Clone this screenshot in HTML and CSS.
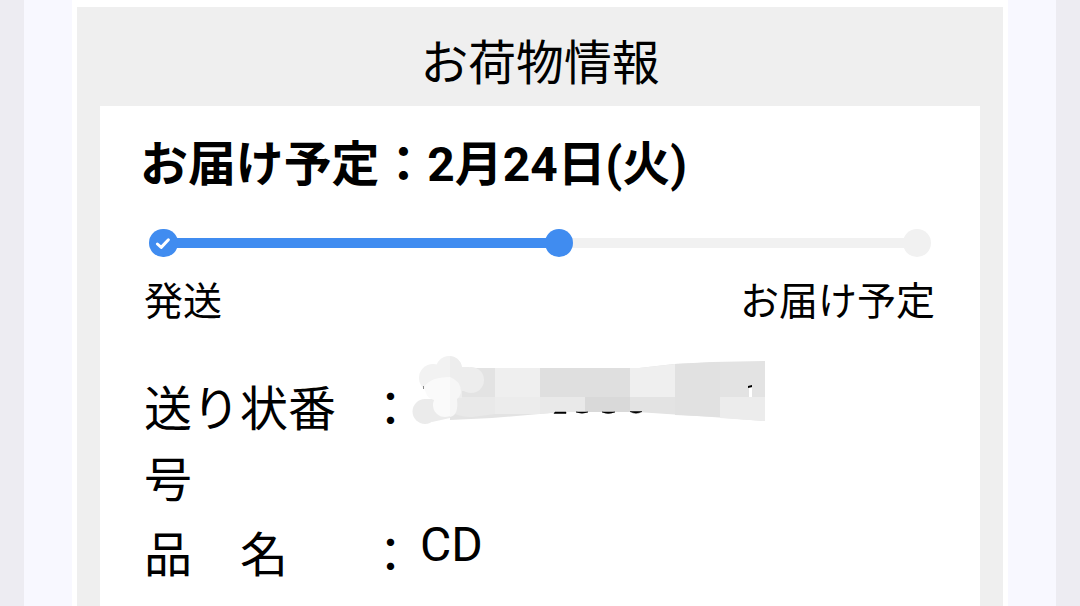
FILE: index.html
```html
<!DOCTYPE html>
<html lang="ja">
<head>
    <meta charset="UTF-8">
    <meta name="viewport" content="width=device-width, initial-scale=1.0">
    <title>お荷物情報</title>
    <link rel="stylesheet" href="styles.css">
</head>
<body>
    <div class="page">
        <div class="container">
            <section class="parcel">
                <h1 class="parcel-title">お荷物情報</h1>
                <div class="card">
                    <h2 class="delivery">お届け予定：2月24日(火)</h2>
                    <div class="progress">
                        <span class="dot done">
                            <svg width="28" height="28" viewBox="0 0 28 28">
                                <path d="M8.4 15 L12.2 18.4 L19.4 10.8" fill="none" stroke="#fff" stroke-width="3" stroke-linecap="round" stroke-linejoin="round"/>
                            </svg>
                        </span>
                        <span class="line done"></span>
                        <span class="dot done"></span>
                        <span class="line"></span>
                        <span class="dot"></span>
                    </div>
                    <div class="steps">
                        <span>発送</span>
                        <span>お届け予定</span>
                    </div>
                    <dl class="details">
                        <dt>送り状番号</dt>
                        <dd class="colon">：</dd>
                        <dd class="value">
                            <!-- masked slip number -->
                            <svg class="mask" width="356" height="72" viewBox="0 0 356 72">
                                <path d="M60 13 H227 L262 9 L300 7 L353 6 V66 L300 62 L225 57 H150 L80 63 L38 65 V20 Z" fill="#e3e3e3"/>
                                <path d="M83 13 H128 V42 H83 Z M218 13 H227 L263 9 V42 H218 Z" fill="#efefef"/>
                                <path d="M128 13 H218 V42 H128 Z" fill="#dfdfdf"/>
                                <path d="M173 42 H218 V57 H173 Z" fill="#d9d9d9"/>
                                <path d="M38 42 H173 V57 H150 L128 59 L83 59 L60 62 Q46 62 38 56 Z" fill="#e9e9e9"/>
                                <path d="M83 42 H128 V59 H83 Z" fill="#ececec"/>
                                <path d="M263 9 L308 7 V62 L263 60 Z" fill="#e1e1e1"/>
                                <path d="M308 42 H353 V66 L308 63 Z" fill="#ececec"/>
                                <circle cx="13" cy="56.5" r="12.5" fill="#ebebeb"/>
                                <path d="M13 44 H38 V63 L20 67 Z" fill="#ebebeb"/>
                                <circle cx="21" cy="23" r="14" fill="#f2f2f2"/>
                                <circle cx="37" cy="14" r="13" fill="#f2f2f2"/>
                                <circle cx="59" cy="25" r="13" fill="#ededed"/>
                                <path d="M38 1 Q48 2 50 12 H57 V36 H50 V43 H38 Z" fill="#ededed"/>
                                <path d="M12 32 Q18 22 38 22 V60 Q31 60 31 43 Q14 45 12 32 Z" fill="#fafafa"/>
                                <circle cx="33" cy="50" r="12" fill="#fafafa"/>
                                <path d="M14 38 H31 V45 H22 Q15 43 14 38 Z" fill="#fafafa"/>
                                <path d="M38 22 Q49 26 49 37 Q48 42 45 44 Q47 60 38 62 Z" fill="#f6f6f6"/>
                                <path d="M11 31 h1 v3 h-1 Z" fill="#888"/>
                                <path d="M143 57 H154 V58.5 H142 Z M164 57 H176 Q170 59.5 164 57 Z M190 57 H203 Q196 60 190 57 Z M218 56.5 H230 Q224 60 218 56.5 Z" fill="#000" stroke="#000" stroke-width=".5"/>
                                <path d="M337 33 h3 v9 h-3 Z" fill="#fff"/>
                                <path d="M336 31 L340 30 V32 L336 33 Z" fill="#000"/>
                            </svg>
                        </dd>
                        <dt>品　名</dt>
                        <dd class="colon">：</dd>
                        <dd class="value">CD</dd>
                    </dl>
                </div>
            </section>
        </div>
    </div>
</body>
</html>
```

FILE: styles.css
```css
* {
    box-sizing: border-box;
}

body {
    margin: 0;
    padding: 0 24px;
    height: 606px;
    overflow: hidden;
    background-color: #edecf2;
    color: #000;
    font-family: Roboto, "Noto Sans CJK JP", sans-serif;
}

.page {
    height: 100%;
    padding: 0 48px;
    background-color: #f8f8ff;
}

.container {
    height: 100%;
    padding: 7px 5px 0;
    background-color: #fff;
}

.parcel {
    height: 600px;
    padding: 0 23px;
    background-color: #efefef;
}

.parcel-title {
    margin: 0;
    padding-top: 21px;
    height: 99px;
    line-height: 72px;
    font-size: 47.8px;
    font-weight: 400;
    text-align: center;
}

.card {
    height: 500px;
    padding: 23px 45px 0 44px;
    background-color: #fff;
}

.delivery {
    margin: 0 0 0 -4px;
    height: 99.5px;
    line-height: 72px;
    font-size: 47.9px;
    font-weight: 700;
    white-space: nowrap;
}

.progress {
    display: flex;
    align-items: center;
    height: 29px;
    margin: 0 4px 0 5px;
}

.dot {
    flex: none;
    width: 28.5px;
    height: 28.5px;
    border-radius: 50%;
    background-color: #f1f1f1;
}

.dot svg {
    display: block;
}

.line {
    flex: 329;
    height: 10px;
    margin: 0 -2px;
    background-color: #f1f1f1;
}

.line.done {
    flex: 367;
}

.done {
    background-color: #408cf0;
}

/* keeps the current dot above the remaining line */
.dot.done {
    z-index: 1;
}

.steps {
    display: flex;
    justify-content: space-between;
    height: 116.5px;
    padding-top: 15.5px;
    line-height: 58px;
    font-size: 39px;
}

.details {
    display: grid;
    grid-template-columns: 222.5px 46.5px 1fr;
    grid-template-rows: 145.5px 72px;
    margin: 0;
    line-height: 72px;
    font-size: 48px;
}

.details dt {
    width: 200px;
    line-height: 71px;
}

.details dd {
    margin: 0;
}

.details .value {
    margin-top: -11px;
    padding-left: 7px;
}

.mask {
    display: block;
    margin: -8px 0 0 -8px;
}
```
